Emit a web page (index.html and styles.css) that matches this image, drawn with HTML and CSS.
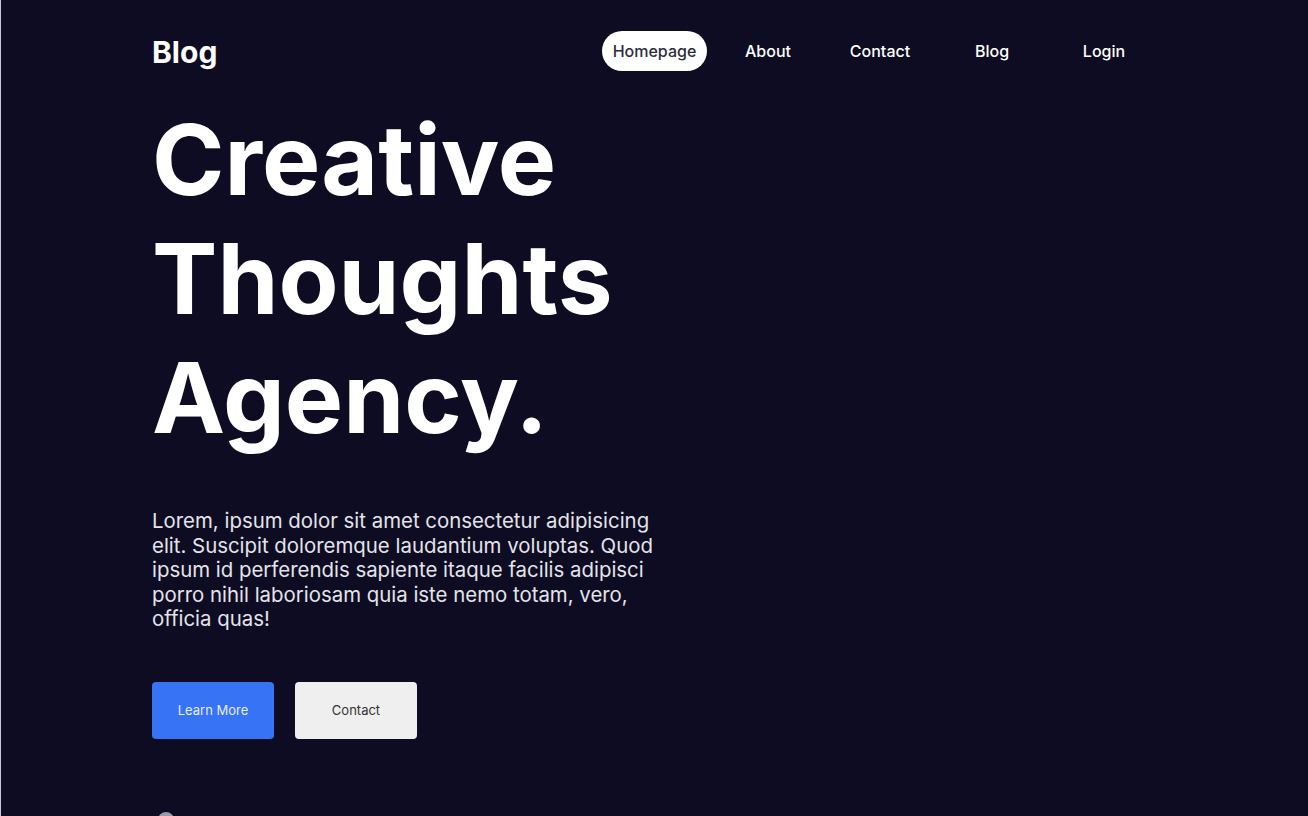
FILE: index.html
```html
<!DOCTYPE html>
<html lang="en">
<head>
<meta charset="utf-8">
<title>Blog</title>
<link rel="stylesheet" href="styles.css">
</head>
<body>
<div class="page">
  <div class="container">
    <header class="topbar">
      <div class="logo">Blog</div>
      <nav class="nav">
        <a class="nav-link active" href="#">Homepage</a>
        <a class="nav-link" href="#">About</a>
        <a class="nav-link" href="#">Contact</a>
        <a class="nav-link" href="#">Blog</a>
        <a class="nav-link" href="#">Login</a>
      </nav>
    </header>
    <section class="hero">
      <h1 class="title">Creative Thoughts Agency.</h1>
      <p class="desc">Lorem, ipsum dolor sit amet consectetur adipisicing elit. Suscipit doloremque laudantium voluptas. Quod ipsum id perferendis sapiente itaque facilis adipisci porro nihil laboriosam quia iste nemo totam, vero, officia quas!</p>
      <div class="actions">
        <a class="btn btn-primary" href="#">Learn More</a>
        <a class="btn btn-light" href="#">Contact</a>
      </div>
      <div class="brands">
        <span class="dot"></span>
      </div>
    </section>
  </div>
</div>
</body>
</html>
```

FILE: styles.css
```css
* { box-sizing: border-box; }
html, body { margin: 0; padding: 0; height: 100%; }
body {
  background: #0d0c22;
  font-family: Inter, "Noto Sans", "Liberation Sans", sans-serif;
  color: #ffffff;
  overflow: hidden;
}
.page {
  min-height: 100%;
  border-left: 1px solid #c9c9d3;
}
.container {
  padding: 0 148px 0 151px;
}
.topbar {
  height: 102px;
  display: flex;
  align-items: center;
  justify-content: space-between;
}
.logo {
  font-size: 30px;
  font-weight: 700;
  margin-top: 2px;
}
.nav {
  display: flex;
  align-items: center;
}
.nav-link {
  width: 112px;
  height: 40px;
  display: flex;
  align-items: center;
  justify-content: center;
  color: #ffffff;
  text-decoration: none;
  font-size: 16px;
  font-weight: 500;
  border-radius: 20px;
}
.nav-link.active {
  background: #ffffff;
  color: #2d2d3a;
  width: 105px;
  margin-left: 2px;
  margin-right: 5px;
}
.hero {
  display: flex;
  flex-direction: column;
}
.title {
  margin: -2px 0 0;
  font-size: 98px;
  line-height: 119px;
  font-weight: 700;
  width: 600px;
}
.desc {
  margin: 52px 0 0;
  width: 512px;
  font-size: 20.4px;
  line-height: 24.5px;
  color: #e4e4ea;
}
.actions {
  display: flex;
  gap: 21px;
  margin-top: 50px;
}
.btn {
  width: 122px;
  height: 57px;
  display: flex;
  align-items: center;
  justify-content: center;
  font-size: 13px;
  border-radius: 4px;
  text-decoration: none;
}
.btn-primary {
  background: #3673f5;
  color: #e8eeff;
}
.btn-light {
  background: #efefef;
  color: #333333;
}
.brands {
  margin-top: 73px;
  padding-left: 6px;
}
.dot {
  display: block;
  width: 16px;
  height: 16px;
  border-radius: 50%;
  background: #9a9aa6;
}
```
